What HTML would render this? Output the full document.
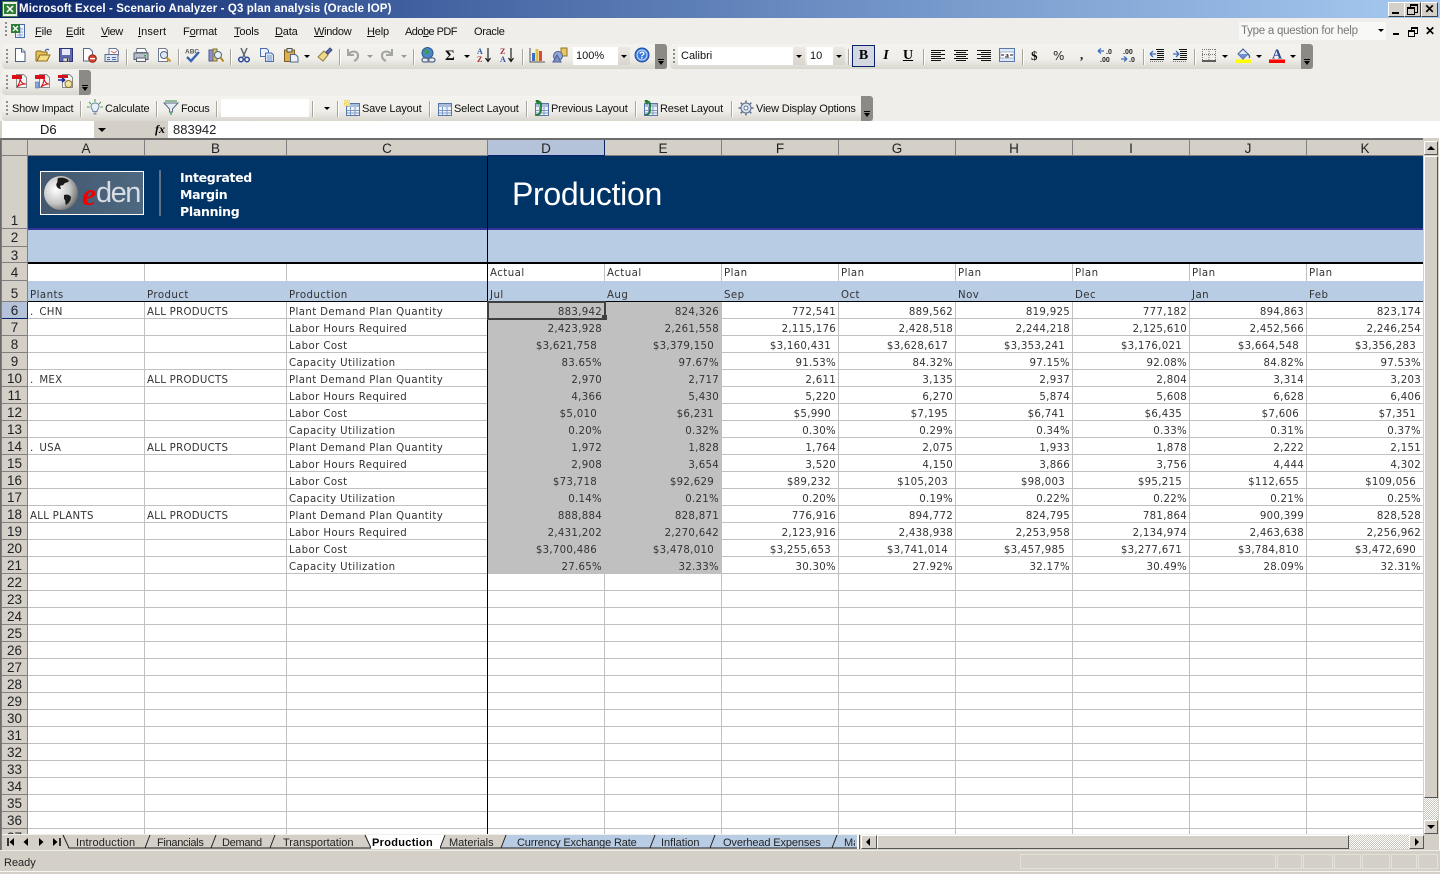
<!DOCTYPE html>
<html><head><meta charset="utf-8"><title>Microsoft Excel - Scenario Analyzer</title>
<style>
html,body{margin:0;padding:0;width:1440px;height:874px;overflow:hidden;background:#fff}
body{position:relative;font-family:"Liberation Sans",sans-serif;font-size:11px;color:#000}
.a{position:absolute}
.t{position:absolute;white-space:nowrap;font-size:11px;line-height:14px;color:#111;letter-spacing:-.15px}
.t u{text-decoration:underline}
#title{left:0;top:0;width:1440px;height:18px;background:linear-gradient(90deg,#0a246a 0,#3a5a9a 25%,#6f92c6 60%,#a6caf0 100%)}
#tt{position:absolute;left:19px;top:2px;color:#fff;font-weight:bold;font-size:11.5px;line-height:15px;white-space:nowrap;letter-spacing:.11px}
.wb{position:absolute;top:2px;width:15px;height:13px;background:#d4d0c8;border:1px solid;border-color:#fff #404040 #404040 #fff;box-sizing:content-box}
#bar{left:0;top:18px;width:1440px;height:103px;background:#efeeea}
.tb{position:absolute;height:25px;border-radius:4px 0 0 4px;background:linear-gradient(#f4f3ef 0,#efeee9 60%,#d9d6ce 100%)}
.end{position:absolute;top:0;width:12px;height:25px;background:#8c8a85;border-radius:0 3px 3px 0}
.end:after{content:"";position:absolute;left:3px;top:17px;border:3px solid transparent;border-top:4px solid #000;border-bottom:0}
.end:before{content:"";position:absolute;left:3px;top:15px;width:6px;height:1px;background:#000;box-shadow:0 0 0 0 #fff}
.grip{position:absolute;top:5px;width:2px;height:16px;background:repeating-linear-gradient(#908e88 0 2px,transparent 2px 4px)}
.sep{position:absolute;top:5px;width:1px;height:16px;background:#a8a69f;box-shadow:1px 0 0 #fff}
.dd{position:absolute;border:3px solid transparent;border-top:3px solid #000;border-bottom:0;width:0;height:0}
.dd.g{border-top-color:#999}
svg.i{position:absolute;width:16px;height:16px;overflow:visible}
.box{position:absolute;background:#fff;height:18px;font-size:11px;line-height:19px;color:#111;white-space:nowrap}
.btn{position:absolute;background:linear-gradient(#eceae4,#d8d5cd);width:13px;height:18px}
#sheet{left:0;top:138px;width:1440px;height:2px;background:#6c6c6c}
.ch{position:absolute;top:140px;height:15px;background:#d4d0c8;border-right:1px solid #808080;border-bottom:1px solid #808080;text-align:center;font-size:13.5px;line-height:18px;color:#222}
.rh{position:absolute;left:2px;width:25px;background:#d4d0c8;border-right:1px solid #808080;border-bottom:1px solid #808080;text-align:center;font-size:13.5px;line-height:18px;color:#222;box-sizing:content-box}
#grid{left:28px;top:302px;width:1395px;height:532px;background:repeating-linear-gradient(to bottom,#fff 0 16px,#c0c0c0 16px 17px)}
.v{position:absolute;width:1px;background:#c0c0c0}
.r{position:absolute;left:28px;height:17px;display:grid;grid-template-columns:117px 142px 201px repeat(8,117px);line-height:21px;font-family:"DejaVu Sans",sans-serif;font-size:10.2px;color:#333;letter-spacing:.28px;white-space:nowrap}
.r i{font-style:normal;padding-left:2px;overflow:hidden}
.r i:nth-child(3){letter-spacing:.38px}
.r b{font-weight:normal;text-align:right;padding-right:3px}
.r.d b{padding-right:8px}
.r.p b{padding-right:3px}
.hd{position:absolute;font-family:"DejaVu Sans",sans-serif;font-size:10.2px;color:#333;letter-spacing:.45px;line-height:14px;white-space:nowrap}
.tab{position:absolute;top:836px;font-size:11px;line-height:14px;color:#222;white-space:nowrap}
.sb{position:absolute;background:#d4d0c8;border:1px solid;border-color:#fff #555 #555 #fff;box-sizing:border-box}
.dith{position:absolute;background-color:#fff;background-image:conic-gradient(#c8c5bd 25%,#fff 0 50%,#c8c5bd 0 75%,#fff 0);background-size:2px 2px}
.pan{position:absolute;top:854px;height:15px;border:1px solid #e4e1da;box-sizing:border-box}
</style></head><body>

<svg width="0" height="0" style="position:absolute">
<defs>
<symbol id="page" viewBox="0 0 16 16"><path d="M3.5 1.5h6l3.5 3.5v9.5h-9.5z" fill="#fff" stroke="#4a5f85"/><path d="M9.5 1.5v3.5h3.5" fill="#dfe6f2" stroke="#4a5f85"/></symbol>
<symbol id="open" viewBox="0 0 16 16"><path d="M1 14V5l1-1h4l1 1h5v3H5L2 14z" fill="#e6c15a" stroke="#8a6d1e"/><path d="M2 14l3-6h10l-3 6z" fill="#f6dc86" stroke="#8a6d1e"/><path d="M10 4c1-2 3-2 4-1" fill="none" stroke="#3c6ab0" stroke-width="1.3"/></symbol>
<symbol id="save" viewBox="0 0 16 16"><path d="M1.5 1.5h13v13h-13z" fill="#5d67b4" stroke="#2d3576"/><path d="M4 2h8v6H4z" fill="#e6e8f5"/><path d="M5 11h6v3.5H5z" fill="#d8d8d8" stroke="#333" stroke-width=".5"/><path d="M9 11.5h1v2.5H9z" fill="#222"/></symbol>
<symbol id="perm" viewBox="0 0 16 16"><path d="M2.5 1.5h6l3 3v9.5h-9z" fill="#fff" stroke="#5b6b8a"/><circle cx="11.5" cy="11.5" r="3.8" fill="#d8452f" stroke="#8c2313"/><path d="M9 11h5v1.3H9z" fill="#fff"/></symbol>
<symbol id="mail" viewBox="0 0 16 16"><path d="M5 1.5h7l2.5 2.5v4H5z" fill="#fff" stroke="#6a7a96"/><path d="M7 4l3 2 3-2" fill="none" stroke="#c66" /><path d="M1 7.500h13v7H1z" fill="#dfe5ee" stroke="#5a6c8a"/><path d="M3 10h3v1H3zM3 12h3v1H3zM8 10h4v1H8zM8 12h4v1H8z" fill="#4a6fa8"/></symbol>
<symbol id="print" viewBox="0 0 16 16"><path d="M4 1.500h8l2 4H3z" fill="#fff" stroke="#6c7687"/><path d="M1 6h14v6.500H1z" fill="#b9c0ca" stroke="#566070"/><path d="M3.500 11h9v3.500h-9z" fill="#f5f5f5" stroke="#566070"/><path d="M11 8h2v1.500h-2z" fill="#2daa3f"/></symbol>
<symbol id="prev" viewBox="0 0 16 16"><path d="M2.500 1.500h7l2 2v11h-9z" fill="#fff" stroke="#6d7a90"/><circle cx="8" cy="8" r="3.500" fill="#dce9f7" stroke="#50637f"/><path d="M10.500 10.500l4 4" stroke="#c49a2c" stroke-width="2.200"/></symbol>
<symbol id="spell" viewBox="0 0 16 16"><text x="0" y="6.500" font-family="Liberation Sans" font-size="6.500" font-weight="bold" fill="#555">ABC</text><path d="M2 10l4 4 8-9" fill="none" stroke="#3465b5" stroke-width="2.400"/></symbol>
<symbol id="res" viewBox="0 0 16 16"><path d="M1 3h4v11H1z" fill="#8a8fd0" stroke="#505590"/><path d="M5 2h4v12H5z" fill="#d6c47a" stroke="#7d6c2c"/><circle cx="10" cy="8" r="3.500" fill="#e8f0f8" stroke="#50637f"/><path d="M12.500 10.500l3 4" stroke="#b88a20" stroke-width="2"/></symbol>
<symbol id="cut" viewBox="0 0 16 16"><path d="M5 1l4 9M11 1L7 10" stroke="#5c6470" stroke-width="1.500" fill="none"/><circle cx="5" cy="12.500" r="2.300" fill="none" stroke="#2c4a9a" stroke-width="1.500"/><circle cx="11" cy="12.500" r="2.300" fill="none" stroke="#2c4a9a" stroke-width="1.500"/></symbol>
<symbol id="copy" viewBox="0 0 16 16"><path d="M1.500 1.500h6l2 2v6h-8z" fill="#eef3fb" stroke="#4a6cab"/><path d="M6.500 6h6l2 2v6.500h-8z" fill="#dbe7f8" stroke="#4a6cab"/><path d="M8 9h5M8 11h5M8 13h5" stroke="#5b7cb8" stroke-width=".8"/></symbol>
<symbol id="paste" viewBox="0 0 16 16"><path d="M1.500 3h10v11.500h-10z" fill="#dcb04a" stroke="#7b5f1d"/><path d="M4 1.500h5V5H4z" fill="#e5e5e5" stroke="#555"/><path d="M7.500 7.500h5l2.500 2.500v5h-7.500z" fill="#eef2f8" stroke="#56688a"/></symbol>
<symbol id="brush" viewBox="0 0 16 16"><path d="M1 10l6-6 4 4-5 6z" fill="#f0d98a" stroke="#93803a"/><path d="M9 5l4-4 2 2-4 4z" fill="#5d6fb0" stroke="#3b4a85"/></symbol>
<symbol id="undo" viewBox="0 0 16 16"><path d="M3 2v6h6" fill="none" stroke="#a5a5a5" stroke-width="2"/><path d="M3.500 7.500C6 3.500 12.500 3.500 13 8c.3 3-1.500 5-4 6" fill="none" stroke="#a5a5a5" stroke-width="2.200"/></symbol>
<symbol id="redo" viewBox="0 0 16 16"><path d="M13 2v6H7" fill="none" stroke="#a5a5a5" stroke-width="2"/><path d="M12.500 7.500C10 3.500 3.500 3.500 3 8c-.3 3 1.500 5 4 6" fill="none" stroke="#a5a5a5" stroke-width="2.200"/></symbol>
<symbol id="link" viewBox="0 0 16 16"><circle cx="7.500" cy="6" r="5.500" fill="#4c86c8" stroke="#2c5a94"/><path d="M4 3c2-1 5 0 5 2s-3 3-4 1z" fill="#3aa046"/><rect x="2" y="11" width="7" height="4" rx="2" fill="none" stroke="#566a8e" stroke-width="1.300"/><rect x="8" y="11" width="7" height="4" rx="2" fill="none" stroke="#566a8e" stroke-width="1.300"/></symbol>
<symbol id="sortaz" viewBox="0 0 16 16"><text x="1" y="7" font-family="Liberation Serif" font-size="8" font-weight="bold" fill="#2c4fa0">A</text><text x="1" y="15" font-family="Liberation Serif" font-size="8" font-weight="bold" fill="#a03030">Z</text><path d="M12 1v13M9.500 11l2.500 3.500 2.500-3.500" stroke="#111" fill="none" stroke-width="1.100"/></symbol>
<symbol id="sortza" viewBox="0 0 16 16"><text x="1" y="7" font-family="Liberation Serif" font-size="8" font-weight="bold" fill="#a03030">Z</text><text x="1" y="15" font-family="Liberation Serif" font-size="8" font-weight="bold" fill="#2c4fa0">A</text><path d="M12 1v13M9.500 11l2.500 3.500 2.500-3.500" stroke="#111" fill="none" stroke-width="1.100"/></symbol>
<symbol id="chart" viewBox="0 0 16 16"><path d="M1 1v14h15" fill="none" stroke="#555"/><path d="M3 6h3v8H3z" fill="#3c6fc0"/><path d="M6.500 2h3v12h-3z" fill="#e8c040"/><path d="M10 4h3v10h-3z" fill="#d84a3a"/></symbol>
<symbol id="draw" viewBox="0 0 16 16"><path d="M9 1h6v8H9z" fill="#e8c860" stroke="#8d7428"/><circle cx="6" cy="9" r="4.500" fill="#96a8d8" stroke="#4c5f96"/><path d="M1 15l4-7 4 7z" fill="#7f90c4" stroke="#4c5f96"/></symbol>
<symbol id="help" viewBox="0 0 16 16"><circle cx="8" cy="8" r="7" fill="#3b78d8" stroke="#1c4ba0"/><circle cx="8" cy="8" r="5" fill="none" stroke="#cfe0fa"/><text x="8" y="11.500" text-anchor="middle" font-family="Liberation Sans" font-size="10" font-weight="bold" fill="#fff">?</text></symbol>
<symbol id="al" viewBox="0 0 16 16"><path d="M1 3.500h14M1 5.500h10M1 7.500h14M1 9.500h10M1 11.500h14M1 13.500h10" stroke="#111"/></symbol>
<symbol id="ac" viewBox="0 0 16 16"><path d="M1 3.500h14M3 5.500h10M1 7.500h14M3 9.500h10M1 11.500h14M3 13.500h10" stroke="#111"/></symbol>
<symbol id="ar" viewBox="0 0 16 16"><path d="M1 3.500h14M5 5.500h10M1 7.500h14M5 9.500h10M1 11.500h14M5 13.500h10" stroke="#111"/></symbol>
<symbol id="merge" viewBox="0 0 16 16"><path d="M.5 1.500h15v13H.5z" fill="#dfe7f4" stroke="#5878b0"/><path d="M1 5h14v6H1z" fill="#fff" stroke="#5878b0" stroke-width=".6"/><text x="8" y="10.500" text-anchor="middle" font-family="Liberation Serif" font-size="7.500" font-weight="bold" fill="#111">a</text><path d="M2 8h3M14 8h-3" stroke="#111"/></symbol>
<symbol id="inc" viewBox="0 0 16 16"><path d="M1 4h6M1 4l3-2.500M1 4l3 2.500" stroke="#3c6cc0" stroke-width="1.300" fill="none"/><text x="9" y="7" font-family="Liberation Sans" font-size="7" font-weight="bold" fill="#222">.0</text><text x="3" y="15" font-family="Liberation Sans" font-size="7" font-weight="bold" fill="#222">.00</text></symbol>
<symbol id="dec" viewBox="0 0 16 16"><text x="3" y="7" font-family="Liberation Sans" font-size="7" font-weight="bold" fill="#222">.00</text><path d="M1 12h6M7 12l-3-2.500M7 12l-3 2.500" stroke="#3c6cc0" stroke-width="1.300" fill="none"/><text x="9" y="15" font-family="Liberation Sans" font-size="7" font-weight="bold" fill="#222">.0</text></symbol>
<symbol id="ind1" viewBox="0 0 16 16"><path d="M7 2.500h8M8 4.500h7M8 6.500h7M8 8.500h7M8 10.500h7M1 12.500h14" stroke="#111"/><path d="M1 14.500h14" stroke="#777" stroke-dasharray="1 1"/><path d="M7 7H1M1 7l3-3M1 7l3 3" stroke="#3c6cc0" stroke-width="1.300" fill="none"/></symbol>
<symbol id="ind2" viewBox="0 0 16 16"><path d="M7 2.500h8M8 4.500h7M8 6.500h7M8 8.500h7M8 10.500h7M1 12.500h14" stroke="#111"/><path d="M1 14.500h14" stroke="#777" stroke-dasharray="1 1"/><path d="M1 7h6M7 7L4 4M7 7l-3 3" stroke="#3c6cc0" stroke-width="1.300" fill="none"/></symbol>
<symbol id="bord" viewBox="0 0 16 16"><path d="M1.500 2v11M8 2v11M14.500 2v11M1 2.500h14M1 7.500h14" stroke="#777" stroke-dasharray="1 1"/><path d="M1 14h14" stroke="#111" stroke-width="1.300"/></symbol>
<symbol id="fill" viewBox="0 0 16 16"><path d="M3 7l5-5 5 5-5 5z" fill="#e4e9f4" stroke="#3c5a9a"/><path d="M3 7h10l-5 5z" fill="#6f90cc"/><path d="M13 7c2 2 2 3 1 4" fill="none" stroke="#3c5a9a" stroke-width="1.300"/><path d="M0 12.500h16V16H0z" fill="#ffff00"/></symbol>
<symbol id="fcol" viewBox="0 0 16 16"><text x="8" y="11.500" text-anchor="middle" font-family="Liberation Serif" font-size="14" font-weight="bold" fill="#2c4a90">A</text><path d="M0 12.500h16V16H0z" fill="#ff0000"/></symbol>
<symbol id="pdf" viewBox="0 0 16 16"><path d="M4.500 1.500h7l3 3v10h-10z" fill="#f4f4f4" stroke="#8a8a8a"/><path d="M0 2h10v4H0z" fill="#d8101a"/><path d="M5 14c3-4 3-7 3-8 1 3 2 5 6 5-3 0-7 1-9 3z" fill="none" stroke="#d8101a" stroke-width="1.100"/></symbol>
<symbol id="pdf2" viewBox="0 0 16 16"><path d="M4.500 1.500h7l3 3v10h-10z" fill="#f4f4f4" stroke="#8a8a8a"/><path d="M0 2h10v4H0z" fill="#d8101a"/><path d="M0 9h4v6H0z" fill="#8aa8dc" stroke="#4a68a0" stroke-width=".6"/><path d="M6 14c3-4 3-7 3-8 1 3 2 5 5 5-2 0-6 1-8 3z" fill="none" stroke="#d8101a" stroke-width="1.100"/></symbol>
<symbol id="pdf3" viewBox="0 0 16 16"><path d="M4.500 1.500h7l3 3v10h-10z" fill="#f4f4f4" stroke="#8a8a8a"/><path d="M0 2h10v3H0z" fill="#d8101a"/><path d="M0 7h7M7 7L4 5M7 7L4 9" stroke="#1c2e98" stroke-width="1.500" fill="none"/><circle cx="10.500" cy="11" r="3.500" fill="#efe4a8" stroke="#8d7428"/></symbol>
<symbol id="bulb" viewBox="0 0 16 16"><path d="M8 4c-3 0-4 2-4 3.500 0 2 2 3 2 5h4c0-2 2-3 2-5C12 6 11 4 8 4z" fill="#e8f0fa" stroke="#6a80a8"/><path d="M6.500 13.500h3v2h-3z" fill="#8a97b0"/><path d="M8 0v3M2 3l2 2M14 3l-2 2M0 8h2.500M13.500 8H16" stroke="#36a040"/></symbol>
<symbol id="funnel" viewBox="0 0 16 16"><path d="M1 4h14L9.500 10v3h-3v-3z" fill="#e6ecf6" stroke="#5a6a88"/><path d="M3 1v2M5 1v2M7 1v2M9 1v2M11 1v2M13 1v2" stroke="#2f8a3a"/><path d="M8 13v3" stroke="#2fa03a" stroke-width="1.300"/></symbol>
<symbol id="tbl" viewBox="0 0 16 16"><path d="M2.500 3.500h13v12h-13z" fill="#eef3fb" stroke="#5776a8"/><path d="M3 4h12v3H3z" fill="#a8bcdc"/><path d="M3 10.500h12M3 13h12M6.500 7v8M11 7v8" stroke="#7f99c2"/></symbol>
<symbol id="star" viewBox="0 0 16 16"><path d="M0 0h6v6H0z" fill="#f0dc78"/><path d="M1 1h1v1H1zM3 3h1v1H3zM4 1h1v1H4zM1 4h1v1H1z" fill="#fff"/></symbol>
<symbol id="gear" viewBox="0 0 16 16"><circle cx="8" cy="8" r="5" fill="#dfe6f2" stroke="#5f6f90"/><circle cx="8" cy="8" r="2" fill="#fff" stroke="#5f6f90"/><path d="M8 .5v2.500M8 13v2.500M.5 8H3M13 8h2.500M2.700 2.700l1.800 1.800M11.500 11.500l1.800 1.800M13.300 2.700l-1.800 1.800M4.500 11.500l-1.800 1.800" stroke="#5f6f90" stroke-width="1.500"/></symbol>
<symbol id="back" viewBox="0 0 16 16"><use href="#tbl"/><path d="M8 10V4c0-2-2-3-5-3M3 1l3-2M3 1l3 3" fill="none" stroke="#1c7a28" stroke-width="1.700"/><path d="M3 15c2 0 5-1 5-5" stroke="#1c7a28" stroke-width="1.700" fill="none"/></symbol>
<symbol id="xl" viewBox="0 0 16 16"><path d="M.5.5h15v15H.5z" fill="#e8f0e4" stroke="#3e7a42"/><path d="M2 3h12v10H2z" fill="#2c7c36"/><path d="M5 5l6 6M11 5l-6 6" stroke="#fff" stroke-width="1.500"/></symbol>
<symbol id="xldoc" viewBox="0 0 16 16"><path d="M5.500 1.500h9v13h-9z" fill="#eef3fb" stroke="#4a6cab"/><path d="M7 6h6M7 9h6M7 12h6M10 4v10" stroke="#8aa4d0"/><path d="M1 1h9v9H1z" fill="#2c7c36"/><path d="M3 3l5 5M8 3L3 8" stroke="#fff" stroke-width="1.400"/></symbol>
</defs></svg>

<!-- Title bar -->
<div class="a" id="title">
 <svg class="i" style="left:2px;top:1px"><use href="#xl"/></svg>
 <div id="tt">Microsoft Excel - Scenario Analyzer - Q3 plan analysis (Oracle IOP)</div>
 <div class="wb" style="left:1388px"><div class="a" style="left:3px;top:9px;width:7px;height:2px;background:#000"></div></div>
 <div class="wb" style="left:1404px"><div class="a" style="left:5px;top:1px;width:6px;height:6px;border:1px solid #000;border-top-width:2px"></div><div class="a" style="left:2px;top:4px;width:6px;height:5px;border:1px solid #000;border-top-width:2px;background:#d4d0c8"></div></div>
 <div class="wb" style="left:1421px;font:bold 12px/12px 'Liberation Sans';text-align:center">✕</div>
</div>

<!-- Bars background -->
<div class="a" id="bar"></div>

<!-- Menu bar -->
<div class="grip" style="left:5px;top:22px"></div>
<svg class="i" style="left:10px;top:23px"><use href="#xldoc"/></svg>
<div class="t" style="left:35px;top:25px"><u>F</u>ile</div>
<div class="t" style="left:66px;top:25px"><u>E</u>dit</div>
<div class="t" style="left:101px;top:25px;letter-spacing:-.5px"><u>V</u>iew</div>
<div class="t" style="left:138px;top:25px;letter-spacing:.1px"><u>I</u>nsert</div>
<div class="t" style="left:183px;top:25px">F<u>o</u>rmat</div>
<div class="t" style="left:234px;top:25px"><u>T</u>ools</div>
<div class="t" style="left:275px;top:25px"><u>D</u>ata</div>
<div class="t" style="left:314px;top:25px;letter-spacing:-.3px"><u>W</u>indow</div>
<div class="t" style="left:367px;top:25px"><u>H</u>elp</div>
<div class="t" style="left:405px;top:25px;letter-spacing:-.55px">Ado<u>b</u>e PDF</div>
<div class="t" style="left:474px;top:25px;letter-spacing:-.3px">Oracle</div>
<div class="box" style="left:1239px;top:22px;width:147px;height:18px;background:#f8f8f6;color:#777;padding-left:2px;box-sizing:border-box;font-size:11.5px;letter-spacing:-.25px;line-height:18px">Type a question for help</div>
<div class="dd" style="left:1378px;top:29px"></div>
<div class="a" style="left:1393px;top:33px;width:6px;height:2px;background:#000"></div>
<div class="a" style="left:1411px;top:27px;width:5px;height:4px;border:1px solid #000;border-top-width:2px"></div>
<div class="a" style="left:1408px;top:30px;width:5px;height:4px;border:1px solid #000;border-top-width:2px;background:#efeeea"></div>
<div class="a" style="left:1425px;top:24px;font:bold 12px/14px 'Liberation Sans'">✕</div>

<!-- Toolbar 1 -->
<div class="tb" style="left:2px;top:44px;width:665px"><div class="end" style="left:653px"></div></div>
<div class="grip" style="left:6px;top:49px"></div>
<svg class="i" style="left:12px;top:47px"><use href="#page"/></svg>
<svg class="i" style="left:35px;top:47px"><use href="#open"/></svg>
<svg class="i" style="left:58px;top:47px"><use href="#save"/></svg>
<svg class="i" style="left:81px;top:47px"><use href="#perm"/></svg>
<svg class="i" style="left:104px;top:47px"><use href="#mail"/></svg>
<div class="sep" style="left:126px;top:49px"></div>
<svg class="i" style="left:133px;top:47px"><use href="#print"/></svg>
<svg class="i" style="left:156px;top:47px"><use href="#prev"/></svg>
<div class="sep" style="left:178px;top:49px"></div>
<svg class="i" style="left:185px;top:47px"><use href="#spell"/></svg>
<svg class="i" style="left:208px;top:47px"><use href="#res"/></svg>
<div class="sep" style="left:230px;top:49px"></div>
<svg class="i" style="left:236px;top:47px"><use href="#cut"/></svg>
<svg class="i" style="left:259px;top:47px"><use href="#copy"/></svg>
<svg class="i" style="left:283px;top:47px"><use href="#paste"/></svg>
<div class="dd" style="left:304px;top:55px"></div>
<svg class="i" style="left:317px;top:47px"><use href="#brush"/></svg>
<div class="sep" style="left:339px;top:49px"></div>
<svg class="i" style="left:345px;top:47px"><use href="#undo"/></svg>
<div class="dd g" style="left:367px;top:55px"></div>
<svg class="i" style="left:379px;top:47px"><use href="#redo"/></svg>
<div class="dd g" style="left:401px;top:55px"></div>
<div class="sep" style="left:413px;top:49px"></div>
<svg class="i" style="left:420px;top:47px"><use href="#link"/></svg>
<div class="a" style="left:445px;top:48px;font:bold 15px/16px 'Liberation Serif';color:#111">Σ</div>
<div class="dd" style="left:464px;top:55px"></div>
<svg class="i" style="left:476px;top:47px"><use href="#sortaz"/></svg>
<svg class="i" style="left:499px;top:47px"><use href="#sortza"/></svg>
<div class="sep" style="left:522px;top:49px"></div>
<svg class="i" style="left:529px;top:47px"><use href="#chart"/></svg>
<svg class="i" style="left:552px;top:47px"><use href="#draw"/></svg>
<div class="box" style="left:573px;top:47px;width:57px;padding-left:3px;box-sizing:border-box">100%</div>
<div class="btn" style="left:618px;top:47px;width:12px"></div><div class="dd" style="left:621px;top:55px"></div>
<svg class="i" style="left:634px;top:47px"><use href="#help"/></svg>

<!-- Toolbar font -->
<div class="tb" style="left:670px;top:44px;width:643px"><div class="end" style="left:631px"></div></div>
<div class="grip" style="left:673px;top:49px"></div>
<div class="box" style="left:678px;top:47px;width:127px;padding-left:3px;box-sizing:border-box">Calibri</div>
<div class="btn" style="left:793px;top:47px;width:12px"></div><div class="dd" style="left:796px;top:55px"></div>
<div class="box" style="left:807px;top:47px;width:38px;padding-left:3px;box-sizing:border-box">10</div>
<div class="btn" style="left:833px;top:47px;width:12px"></div><div class="dd" style="left:836px;top:55px"></div>
<div class="sep" style="left:848px;top:49px"></div>
<div class="a" style="left:852px;top:45px;width:21px;height:20px;background:#d4d8e2;border:1px solid #0a246a;text-align:center;font:bold 14px/20px 'Liberation Serif'">B</div>
<div class="a" style="left:879px;top:46px;width:14px;text-align:center;font:bold italic 14px/20px 'Liberation Serif'">I</div>
<div class="a" style="left:901px;top:46px;width:14px;text-align:center;font:bold 14px/20px 'Liberation Serif';text-decoration:underline">U</div>
<div class="sep" style="left:923px;top:49px"></div>
<svg class="i" style="left:930px;top:47px"><use href="#al"/></svg>
<svg class="i" style="left:953px;top:47px"><use href="#ac"/></svg>
<svg class="i" style="left:976px;top:47px"><use href="#ar"/></svg>
<svg class="i" style="left:999px;top:47px"><use href="#merge"/></svg>
<div class="sep" style="left:1022px;top:49px"></div>
<div class="a" style="left:1031px;top:48px;font:bold 13px/16px 'Liberation Serif';color:#111">$</div>
<div class="a" style="left:1053px;top:48px;font:12px/16px 'DejaVu Sans';color:#222">%</div>
<div class="a" style="left:1080px;top:47px;font:bold 13px/16px 'Liberation Serif';color:#111">,</div>
<svg class="i" style="left:1097px;top:47px"><use href="#inc"/></svg>
<svg class="i" style="left:1120px;top:47px"><use href="#dec"/></svg>
<div class="sep" style="left:1143px;top:49px"></div>
<svg class="i" style="left:1149px;top:47px"><use href="#ind1"/></svg>
<svg class="i" style="left:1172px;top:47px"><use href="#ind2"/></svg>
<div class="sep" style="left:1194px;top:49px"></div>
<svg class="i" style="left:1201px;top:47px"><use href="#bord"/></svg>
<div class="dd" style="left:1222px;top:55px"></div>
<svg class="i" style="left:1235px;top:47px"><use href="#fill"/></svg>
<div class="dd" style="left:1256px;top:55px"></div>
<svg class="i" style="left:1269px;top:47px"><use href="#fcol"/></svg>
<div class="dd" style="left:1290px;top:55px"></div>

<!-- Toolbar 2 -->
<div class="tb" style="left:2px;top:70px;width:89px"><div class="end" style="left:77px"></div></div>
<div class="grip" style="left:6px;top:75px"></div>
<svg class="i" style="left:12px;top:73px"><use href="#pdf"/></svg>
<svg class="i" style="left:35px;top:73px"><use href="#pdf2"/></svg>
<svg class="i" style="left:58px;top:73px"><use href="#pdf3"/></svg>

<!-- Toolbar 3 -->
<div class="tb" style="left:2px;top:96px;width:871px"><div class="end" style="left:859px"></div></div>
<div class="grip" style="left:6px;top:101px"></div>
<div class="t" style="left:12px;top:102px;letter-spacing:-.2px">Show Impact</div>
<div class="sep" style="left:80px;top:101px"></div>
<svg class="i" style="left:87px;top:99px"><use href="#bulb"/></svg>
<div class="t" style="left:105px;top:102px">Calculate</div>
<div class="sep" style="left:156px;top:101px"></div>
<svg class="i" style="left:163px;top:99px"><use href="#funnel"/></svg>
<div class="t" style="left:181px;top:102px;letter-spacing:-.3px">Focus</div>
<div class="sep" style="left:216px;top:101px"></div>
<div class="box" style="left:221px;top:99px;width:88px"></div>
<div class="sep" style="left:312px;top:101px"></div>
<div class="dd" style="left:324px;top:107px"></div>
<div class="sep" style="left:337px;top:101px"></div>
<svg class="i" style="left:344px;top:100px"><use href="#tbl"/></svg>
<svg class="i" style="left:344px;top:100px"><use href="#star"/></svg>
<div class="t" style="left:362px;top:102px">Save Layout</div>
<div class="sep" style="left:429px;top:101px"></div>
<svg class="i" style="left:436px;top:100px"><use href="#tbl"/></svg>
<div class="t" style="left:454px;top:102px">Select Layout</div>
<div class="sep" style="left:526px;top:101px"></div>
<svg class="i" style="left:533px;top:100px"><use href="#back"/></svg>
<div class="t" style="left:551px;top:102px">Previous Layout</div>
<div class="sep" style="left:635px;top:101px"></div>
<svg class="i" style="left:642px;top:100px"><use href="#back"/></svg>
<div class="t" style="left:660px;top:102px">Reset Layout</div>
<div class="sep" style="left:731px;top:101px"></div>
<svg class="i" style="left:738px;top:100px"><use href="#gear"/></svg>
<div class="t" style="left:756px;top:102px;letter-spacing:-.2px">View Display Options</div>

<!-- Formula bar -->
<div class="a" style="left:0;top:121px;width:1440px;height:17px;background:#fff"></div>
<div class="a" style="left:94px;top:121px;width:74px;height:17px;background:#d4d0c8"></div>
<div class="a" style="left:0;top:121px;width:2px;height:17px;background:#d4d0c8"></div>
<div class="t" style="left:40px;top:122px;font-size:13px;line-height:15px;letter-spacing:0">D6</div>
<div class="dd" style="left:98px;top:128px;border-width:4px;border-bottom:0"></div>
<div class="a" style="left:155px;top:122px;font:italic bold 12px/15px 'Liberation Serif'">fx</div>
<div class="t" style="left:173px;top:122px;font-size:13px;line-height:15px;color:#222;letter-spacing:0">883942</div>

<!-- Sheet frame -->
<div class="a" id="sheet"></div>
<div class="a" style="left:0;top:138px;width:2px;height:712px;background:#6c6c6c"></div>
<div class="a" style="left:1px;top:138px;width:1px;height:712px;background:#808080"></div>

<!-- Column heads -->
<div class="ch" style="left:2px;width:25px"></div>
<div class="ch" style="left:28px;width:116px">A</div>
<div class="ch" style="left:145px;width:141px">B</div>
<div class="ch" style="left:287px;width:200px">C</div>
<div class="ch" style="left:488px;width:116px;background:#b4c3da;border-right-color:#0a246a;border-bottom-color:#0a246a">D</div>
<div class="ch" style="left:605px;width:116px">E</div>
<div class="ch" style="left:722px;width:116px">F</div>
<div class="ch" style="left:839px;width:116px">G</div>
<div class="ch" style="left:956px;width:116px">H</div>
<div class="ch" style="left:1073px;width:116px">I</div>
<div class="ch" style="left:1190px;width:116px">J</div>
<div class="ch" style="left:1307px;width:116px">K</div>

<!-- Row heads -->
<div class="rh" style="top:156px;height:72px;line-height:130px">1</div>
<div class="rh" style="top:229px;height:17px">2</div>
<div class="rh" style="top:247px;height:15px">3</div>
<div class="rh" style="top:263px;height:17px;line-height:20px">4</div>
<div class="rh" style="top:281px;height:20px;line-height:26px">5</div>
<div class="rh" style="top:302px;height:16px;background:#b4c3da;border-color:#0a246a">6</div>
<div class="rh" style="top:319px;height:16px">7</div>
<div class="rh" style="top:336px;height:16px">8</div>
<div class="rh" style="top:353px;height:16px">9</div>
<div class="rh" style="top:370px;height:16px">10</div>
<div class="rh" style="top:387px;height:16px">11</div>
<div class="rh" style="top:404px;height:16px">12</div>
<div class="rh" style="top:421px;height:16px">13</div>
<div class="rh" style="top:438px;height:16px">14</div>
<div class="rh" style="top:455px;height:16px">15</div>
<div class="rh" style="top:472px;height:16px">16</div>
<div class="rh" style="top:489px;height:16px">17</div>
<div class="rh" style="top:506px;height:16px">18</div>
<div class="rh" style="top:523px;height:16px">19</div>
<div class="rh" style="top:540px;height:16px">20</div>
<div class="rh" style="top:557px;height:16px">21</div>
<div class="rh" style="top:574px;height:16px">22</div>
<div class="rh" style="top:591px;height:16px">23</div>
<div class="rh" style="top:608px;height:16px">24</div>
<div class="rh" style="top:625px;height:16px">25</div>
<div class="rh" style="top:642px;height:16px">26</div>
<div class="rh" style="top:659px;height:16px">27</div>
<div class="rh" style="top:676px;height:16px">28</div>
<div class="rh" style="top:693px;height:16px">29</div>
<div class="rh" style="top:710px;height:16px">30</div>
<div class="rh" style="top:727px;height:16px">31</div>
<div class="rh" style="top:744px;height:16px">32</div>
<div class="rh" style="top:761px;height:16px">33</div>
<div class="rh" style="top:778px;height:16px">34</div>
<div class="rh" style="top:795px;height:16px">35</div>
<div class="rh" style="top:812px;height:16px">36</div>
<div class="rh" style="top:829px;height:5px;overflow:hidden;border-bottom:0">37</div>

<!-- Banner -->
<div class="a" style="left:28px;top:156px;width:1395px;height:72px;background:#003366"></div>
<div class="a" style="left:28px;top:228px;width:1395px;height:2px;background:#333399"></div>
<div class="a" style="left:28px;top:230px;width:1395px;height:32px;background:#b8cce4"></div>
<div class="a" style="left:28px;top:262px;width:1395px;height:2px;background:#000"></div>
<div class="a" style="left:28px;top:264px;width:1395px;height:17px;background:#fff"></div>
<div class="a" style="left:28px;top:281px;width:1395px;height:20px;background:#b8cce4"></div>
<div class="a" style="left:28px;top:301px;width:1395px;height:1px;background:#000"></div>

<!-- Logo -->
<div class="a" style="left:40px;top:171px;width:102px;height:42px;border:1px solid #fff;background:linear-gradient(90deg,#43586f,#4d6880);overflow:hidden"></div>
<svg class="a" style="left:43px;top:175px" width="36" height="36" viewBox="0 0 36 36"><defs><radialGradient id="gl" cx=".35" cy=".4" r=".7"><stop offset="0" stop-color="#fff"/><stop offset=".6" stop-color="#c4c4c4"/><stop offset="1" stop-color="#666"/></radialGradient></defs><circle cx="18" cy="18" r="17" fill="url(#gl)"/><path d="M15 3c4-1 9 0 11 3-1 2-4 1-5 3-1 2-3 1-4 2l1 3c-2 0-3-1-4-2-1-2-1-3 0-4 1-2 0-3 1-5zM21 20c3-1 6 0 7 2 0 3-2 6-5 8-1-2 0-5-2-6z" fill="#1a1a1a"/></svg>
<div class="a" style="left:82px;top:177px;font:italic bold 32px/34px 'Liberation Serif';color:#f00000">e</div>
<div class="a" style="left:96px;top:176px;font:29px/34px 'Liberation Sans';color:#d8dde4;letter-spacing:-1.5px">den</div>
<div class="a" style="left:159px;top:170px;width:2px;height:46px;background:#5d7088"></div>
<div class="a" style="left:180px;top:169px;font:bold 12.500px/17px 'DejaVu Sans';color:#fff;letter-spacing:-.3px">Integrated<br>Margin<br>Planning</div>
<div class="a" style="left:512px;top:176px;font:32px/37px 'Liberation Sans';color:#fff;letter-spacing:-.3px">Production</div>

<!-- Grid -->
<div class="a" id="grid"></div>
<div class="v" style="left:144px;top:264px;height:17px"></div><div class="v" style="left:144px;top:302px;height:532px"></div>
<div class="v" style="left:286px;top:264px;height:17px"></div><div class="v" style="left:286px;top:302px;height:532px"></div>
<div class="v" style="left:604px;top:264px;height:17px"></div><div class="v" style="left:604px;top:302px;height:532px"></div>
<div class="v" style="left:721px;top:264px;height:17px"></div><div class="v" style="left:721px;top:302px;height:532px"></div>
<div class="v" style="left:838px;top:264px;height:17px"></div><div class="v" style="left:838px;top:302px;height:532px"></div>
<div class="v" style="left:955px;top:264px;height:17px"></div><div class="v" style="left:955px;top:302px;height:532px"></div>
<div class="v" style="left:1072px;top:264px;height:17px"></div><div class="v" style="left:1072px;top:302px;height:532px"></div>
<div class="v" style="left:1189px;top:264px;height:17px"></div><div class="v" style="left:1189px;top:302px;height:532px"></div>
<div class="v" style="left:1306px;top:264px;height:17px"></div><div class="v" style="left:1306px;top:302px;height:532px"></div>
<div class="a" style="left:488px;top:302px;width:234px;height:272px;background:#c0c0c0"></div>
<div class="a" style="left:487px;top:156px;width:1px;height:678px;background:#000"></div>

<!-- Header labels -->
<div class="hd" style="left:490px;top:267px">Actual</div><div class="hd" style="left:607px;top:267px">Actual</div>
<div class="hd" style="left:724px;top:267px">Plan</div><div class="hd" style="left:841px;top:267px">Plan</div>
<div class="hd" style="left:958px;top:267px">Plan</div><div class="hd" style="left:1075px;top:267px">Plan</div>
<div class="hd" style="left:1192px;top:267px">Plan</div><div class="hd" style="left:1309px;top:267px">Plan</div>
<div class="hd" style="left:30px;top:289px">Plants</div><div class="hd" style="left:147px;top:289px">Product</div><div class="hd" style="left:289px;top:289px">Production</div>
<div class="hd" style="left:490px;top:289px">Jul</div><div class="hd" style="left:607px;top:289px">Aug</div><div class="hd" style="left:724px;top:289px">Sep</div><div class="hd" style="left:841px;top:289px">Oct</div><div class="hd" style="left:958px;top:289px">Nov</div><div class="hd" style="left:1075px;top:289px">Dec</div><div class="hd" style="left:1192px;top:289px">Jan</div><div class="hd" style="left:1309px;top:289px">Feb</div>

<!-- Data -->
<div class="r" style="top:302px"><i style="word-spacing:-.6px">.&nbsp; CHN</i><i>ALL PRODUCTS</i><i>Plant Demand Plan Quantity</i><b>883,942</b><b>824,326</b><b>772,541</b><b>889,562</b><b>819,925</b><b>777,182</b><b>894,863</b><b>823,174</b></div>
<div class="r" style="top:319px"><i></i><i></i><i>Labor Hours Required</i><b>2,423,928</b><b>2,261,558</b><b>2,115,176</b><b>2,428,518</b><b>2,244,218</b><b>2,125,610</b><b>2,452,566</b><b>2,246,254</b></div>
<div class="r d" style="top:336px"><i></i><i></i><i>Labor Cost</i><b>$3,621,758</b><b>$3,379,150</b><b>$3,160,431</b><b>$3,628,617</b><b>$3,353,241</b><b>$3,176,021</b><b>$3,664,548</b><b>$3,356,283</b></div>
<div class="r p" style="top:353px"><i></i><i></i><i>Capacity Utilization</i><b>83.65%</b><b>97.67%</b><b>91.53%</b><b>84.32%</b><b>97.15%</b><b>92.08%</b><b>84.82%</b><b>97.53%</b></div>
<div class="r" style="top:370px"><i style="word-spacing:-.6px">.&nbsp; MEX</i><i>ALL PRODUCTS</i><i>Plant Demand Plan Quantity</i><b>2,970</b><b>2,717</b><b>2,611</b><b>3,135</b><b>2,937</b><b>2,804</b><b>3,314</b><b>3,203</b></div>
<div class="r" style="top:387px"><i></i><i></i><i>Labor Hours Required</i><b>4,366</b><b>5,430</b><b>5,220</b><b>6,270</b><b>5,874</b><b>5,608</b><b>6,628</b><b>6,406</b></div>
<div class="r d" style="top:404px"><i></i><i></i><i>Labor Cost</i><b>$5,010</b><b>$6,231</b><b>$5,990</b><b>$7,195</b><b>$6,741</b><b>$6,435</b><b>$7,606</b><b>$7,351</b></div>
<div class="r p" style="top:421px"><i></i><i></i><i>Capacity Utilization</i><b>0.20%</b><b>0.32%</b><b>0.30%</b><b>0.29%</b><b>0.34%</b><b>0.33%</b><b>0.31%</b><b>0.37%</b></div>
<div class="r" style="top:438px"><i style="word-spacing:-.6px">.&nbsp; USA</i><i>ALL PRODUCTS</i><i>Plant Demand Plan Quantity</i><b>1,972</b><b>1,828</b><b>1,764</b><b>2,075</b><b>1,933</b><b>1,878</b><b>2,222</b><b>2,151</b></div>
<div class="r" style="top:455px"><i></i><i></i><i>Labor Hours Required</i><b>2,908</b><b>3,654</b><b>3,520</b><b>4,150</b><b>3,866</b><b>3,756</b><b>4,444</b><b>4,302</b></div>
<div class="r d" style="top:472px"><i></i><i></i><i>Labor Cost</i><b>$73,718</b><b>$92,629</b><b>$89,232</b><b>$105,203</b><b>$98,003</b><b>$95,215</b><b>$112,655</b><b>$109,056</b></div>
<div class="r p" style="top:489px"><i></i><i></i><i>Capacity Utilization</i><b>0.14%</b><b>0.21%</b><b>0.20%</b><b>0.19%</b><b>0.22%</b><b>0.22%</b><b>0.21%</b><b>0.25%</b></div>
<div class="r" style="top:506px"><i>ALL PLANTS</i><i>ALL PRODUCTS</i><i>Plant Demand Plan Quantity</i><b>888,884</b><b>828,871</b><b>776,916</b><b>894,772</b><b>824,795</b><b>781,864</b><b>900,399</b><b>828,528</b></div>
<div class="r" style="top:523px"><i></i><i></i><i>Labor Hours Required</i><b>2,431,202</b><b>2,270,642</b><b>2,123,916</b><b>2,438,938</b><b>2,253,958</b><b>2,134,974</b><b>2,463,638</b><b>2,256,962</b></div>
<div class="r d" style="top:540px"><i></i><i></i><i>Labor Cost</i><b>$3,700,486</b><b>$3,478,010</b><b>$3,255,653</b><b>$3,741,014</b><b>$3,457,985</b><b>$3,277,671</b><b>$3,784,810</b><b>$3,472,690</b></div>
<div class="r p" style="top:557px"><i></i><i></i><i>Capacity Utilization</i><b>27.65%</b><b>32.33%</b><b>30.30%</b><b>27.92%</b><b>32.17%</b><b>30.49%</b><b>28.09%</b><b>32.31%</b></div>

<!-- Active cell -->
<div class="a" style="left:487px;top:301px;width:115px;height:15px;border:2px solid #404040;box-sizing:content-box"></div>
<div class="a" style="left:602px;top:315px;width:5px;height:5px;background:#404040"></div>

<!-- Vertical scrollbar -->
<div class="a" style="left:1423px;top:138px;width:17px;height:712px;background:#d4d0c8"></div>
<div class="a" style="left:1439px;top:138px;width:1px;height:712px;background:#fff"></div>
<div class="sb" style="left:1424px;top:141px;width:14px;height:14px"><div class="a" style="left:2px;top:4px;border:4px solid transparent;border-bottom:4px solid #000;border-top:0"></div></div>
<div class="sb" style="left:1424px;top:156px;width:14px;height:642px"></div>
<div class="dith" style="left:1424px;top:798px;width:14px;height:22px"></div>
<div class="sb" style="left:1424px;top:820px;width:14px;height:14px"><div class="a" style="left:2px;top:4px;border:4px solid transparent;border-top:4px solid #000;border-bottom:0"></div></div>

<!-- Tabs -->
<div class="a" style="left:2px;top:834px;width:1421px;height:16px;background:#d4d0c8"></div>
<div class="a" style="left:2px;top:834px;width:1421px;height:1px;background:#f0efeb"></div>
<svg class="a" style="left:4px;top:836px" width="58" height="12"><path d="M4 2v8" stroke="#000" stroke-width="1.500"/><path d="M10 2v8L5.500 6z" fill="#000"/><path d="M24 2v8l-4.500-4z" fill="#000"/><path d="M35 2v8l4.500-4z" fill="#000"/><path d="M49 2v8l4.500-4z" fill="#000"/><path d="M56 2v8" stroke="#000" stroke-width="1.500"/></svg>
<svg class="a" style="left:60px;top:834px" width="800" height="16">
 <path d="M305 1l6 13h69l5-13z" fill="#fff"/>
 <path d="M446 1l-5 13h149l5-13z" fill="#b8cce4"/>
 <path d="M595 1l-5 13h60l5-13z" fill="#b8cce4"/>
 <path d="M655 1l-5 13h122l5-13z" fill="#b8cce4"/>
 <path d="M777 1l-5 13h25V1z" fill="#b8cce4"/>
 <path d="M3 1l6 13H85l5-13M85 14H151l5-13M151 14H210l5-13M210 14H311M305 1l6 13H380l5-13M380 14H441l5-13M441 14H590l5-13M590 14H650l5-13M650 14H772l5-13M772 14H797" fill="none" stroke="#222" stroke-width="1"/>
 <path d="M311 14h69" stroke="#fff" stroke-width="2"/>
</svg>
<div class="tab" style="left:76px;letter-spacing:.15px">Introduction</div>
<div class="tab" style="left:157px;letter-spacing:-.3px">Financials</div>
<div class="tab" style="left:222px;letter-spacing:-.3px">Demand</div>
<div class="tab" style="left:283px">Transportation</div>
<div class="tab" style="left:372px;font-weight:bold;color:#000;letter-spacing:.3px">Production</div>
<div class="tab" style="left:449px">Materials</div>
<div class="tab" style="left:517px;letter-spacing:-.15px">Currency Exchange Rate</div>
<div class="tab" style="left:661px">Inflation</div>
<div class="tab" style="left:723px;letter-spacing:-.12px">Overhead Expenses</div>
<div class="tab" style="left:844px;width:11px;overflow:hidden">Manufacturing</div>
<div class="a" style="left:857px;top:835px;width:2px;height:14px;background:#fff;border-right:1px solid #555"></div>
<div class="sb" style="left:861px;top:835px;width:16px;height:14px"><div class="a" style="left:4px;top:2px;border:4px solid transparent;border-right:4px solid #000;border-left:0"></div></div>
<div class="sb" style="left:877px;top:835px;width:472px;height:14px"></div>
<div class="dith" style="left:1349px;top:835px;width:60px;height:14px"></div>
<div class="sb" style="left:1409px;top:835px;width:15px;height:14px"><div class="a" style="left:5px;top:2px;border:4px solid transparent;border-left:4px solid #000;border-right:0"></div></div>

<!-- Status bar -->
<div class="a" style="left:0;top:850px;width:1440px;height:24px;background:#d4d0c8"></div>
<div class="a" style="left:0;top:850px;width:1440px;height:1px;background:#eeece6"></div>
<div class="t" style="left:4px;top:856px;color:#222;letter-spacing:0">Ready</div>
<div class="pan" style="left:1020px;width:256px"></div>
<div class="pan" style="left:1277px;width:25px"></div>
<div class="pan" style="left:1303px;width:30px"></div>
<div class="pan" style="left:1334px;width:27px"></div>
<div class="pan" style="left:1362px;width:28px"></div>
<div class="pan" style="left:1391px;width:26px"></div>
<div class="pan" style="left:1418px;width:20px"></div>
<div class="a" style="left:0;top:871px;width:1440px;height:1px;background:#f4f3ef"></div>

</body></html>
